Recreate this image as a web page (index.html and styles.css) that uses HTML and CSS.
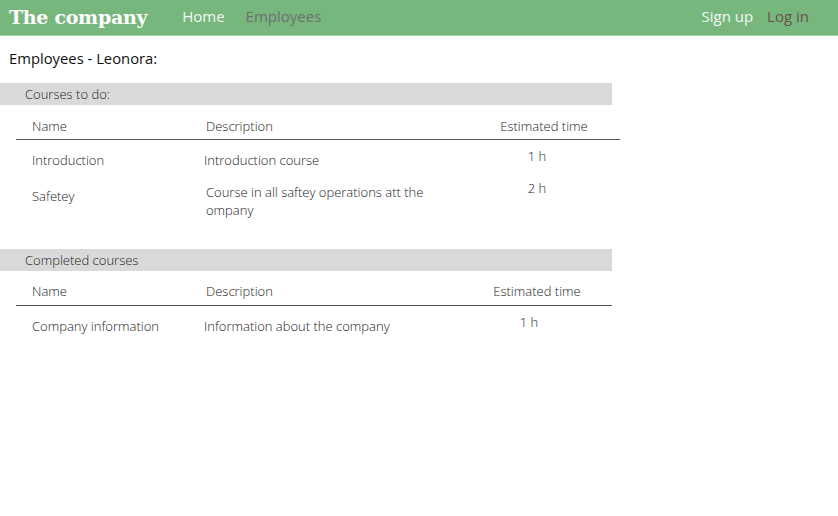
FILE: index.html
```html
<!DOCTYPE html>
<html>
<head>
<meta charset="utf-8">
<link rel="stylesheet" href="styles.css">
</head>
<body>
<header class="nav">
  <div class="brand">The company</div>
  <nav class="links">
    <a class="link light">Home</a>
    <a class="link dim">Employees</a>
  </nav>
  <nav class="auth">
    <a class="link light">Sign up</a>
    <a class="link dark">Log in</a>
  </nav>
</header>
<main class="content">
  <h1 class="title">Employees - Leonora:</h1>

  <section class="block">
    <div class="bar">Courses to do:</div>
    <div class="table t1">
      <div class="row head">
        <div class="c-name">Name</div>
        <div class="c-desc">Description</div>
        <div class="c-time">Estimated time</div>
      </div>
      <div class="row r1">
        <div class="c-name">Introduction</div>
        <div class="c-desc shift">Introduction course</div>
        <div class="c-time up">1 h</div>
      </div>
      <div class="row r2">
        <div class="c-name down">Safetey</div>
        <div class="c-desc">Course in all saftey operations att the ompany</div>
        <div class="c-time up">2 h</div>
      </div>
    </div>
  </section>

  <section class="block second">
    <div class="bar">Completed courses</div>
    <div class="table t2">
      <div class="row head">
        <div class="c-name">Name</div>
        <div class="c-desc">Description</div>
        <div class="c-time">Estimated time</div>
      </div>
      <div class="row r1">
        <div class="c-name">Company information</div>
        <div class="c-desc shift">Information about the company</div>
        <div class="c-time up">1 h</div>
      </div>
    </div>
  </section>
</main>
</body>
</html>
```
FILE: styles.css
```css
* { box-sizing: border-box; }
body {
  margin: 0;
  font-family: "Open Sans", sans-serif;
  color: #111;
  background: #fff;
}
.nav {
  height: 36px;
  background: #77b77d;
  border-bottom: 1px solid #a9d3ad;
  display: flex;
  align-items: center;
  padding: 0 0 3px 9px;
}
.brand {
  font-family: "DejaVu Serif", "Liberation Serif", serif;
  font-weight: bold;
  font-size: 19px;
  color: #fff;
  letter-spacing: -0.3px;
  margin-right: 35px;
  position: relative;
  top: 1px;
}
.links, .auth {
  display: flex;
  gap: 21px;
}
.auth {
  margin-left: auto;
  margin-right: 29px;
  gap: 14px;
}
.link {
  font-size: 15px;
  text-decoration: none;
}
.light { color: #f4f8f4; }
.dim { color: #6f6f6f; }
.dark { color: #6a5252; }

.content {
  padding: 0;
}
.title {
  margin: 0;
  font-size: 14.8px;
  font-weight: 400;
  padding: 13px 0 0 9px;
  height: 47px;
  line-height: 18px;
}
.block { width: 612px; }
.second { margin-top: 30px; }
.bar {
  background: #d9d9d9;
  height: 22px;
  line-height: 22px;
  padding-left: 25px;
  font-size: 13px;
  font-weight: 300;
  color: #222;
}
.table {
  margin-left: 16px;
  font-size: 13px;
  font-weight: 300;
  color: #222;
}
.t1 { width: 604px; }
.t2 { width: 596px; }
.row {
  display: grid;
  line-height: 18px;
}
.t1 .row { grid-template-columns: 188px 280px 120px; }
.t2 .row { grid-template-columns: 188px 274px 134px; }
.head {
  height: 35px;
  padding-top: 12px;
  border-bottom: 1px solid #555;
}
.t2 .head { padding-top: 11px; }
.c-name { padding-left: 16px; }
.c-desc { padding-left: 2px; }
.c-time { text-align: center; }
.t1 .r1 { padding-top: 11px; height: 39px; }
.t1 .r2 { padding-top: 4px; }
.t1 .c-desc { padding-right: 30px; }
.t1 .r1 .c-time, .t1 .r2 .c-time { padding-right: 14px; }
.t2 .c-time { padding-right: 16px; }
.t2 .r1 { padding-top: 11px; }
.t2 .r1 .c-time { padding-right: 32px; }
.shift { margin-left: -2px; }
.up { position: relative; top: -4px; }
.down { position: relative; top: 4px; }
```
